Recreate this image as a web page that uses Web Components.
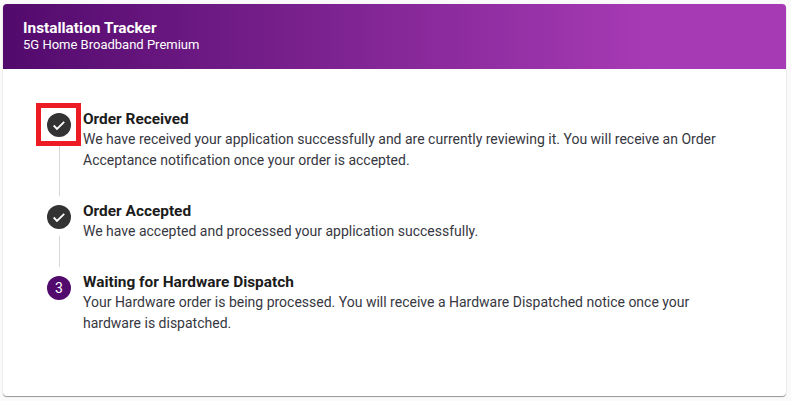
<!DOCTYPE html>
<html>
<head>
<meta charset="utf-8">
<title>Installation Tracker</title>
<style>
  html, body { margin: 0; height: 100%; background: #fafafa; overflow: hidden; }
  body { font-family: Roboto, "Liberation Sans", sans-serif; color: #212121; }
</style>
</head>
<body>
<tracker-card heading="Installation Tracker" subheading="5G Home Broadband Premium">
  <tracker-step state="done" marked heading="Order Received">We have received your application successfully and are currently reviewing it. You will receive an Order Acceptance notification once your order is accepted.</tracker-step>
  <tracker-step state="done" heading="Order Accepted">We have accepted and processed your application successfully.</tracker-step>
  <tracker-step number="3" last heading="Waiting for Hardware Dispatch">Your Hardware order is being processed. You will receive a Hardware Dispatched notice once your hardware is dispatched.</tracker-step>
</tracker-card>

<script>
class TrackerCard extends HTMLElement {
  constructor() {
    super();
    this.attachShadow({ mode: 'open' });
    this.shadowRoot.innerHTML = `
      <style>
        :host {
          display: block;
          box-sizing: border-box;
          width: 783px;
          height: 392px;
          margin: 4px 0 0 3px;
          background: #fff;
          border-radius: 4px;
          overflow: hidden;
          box-shadow: 0 1px 1px rgba(0,0,0,0.4), 0 0 2px rgba(0,0,0,0.06);
        }
        header {
          height: 65px;
          box-sizing: border-box;
          padding: 15px 20px 0;
          color: #fff;
          background: linear-gradient(90deg, #520a6c 0%, #a63ab4 82%);
        }
        h1 { margin: 0; font-size: 15.4px; line-height: 18px; font-weight: 700; }
        p { margin: 0; font-size: 13px; line-height: 16px; }
        main { padding: 39px 44px 0; }
      </style>
      <header>
        <h1>${this.getAttribute('heading')}</h1>
        <p>${this.getAttribute('subheading')}</p>
      </header>
      <main><slot></slot></main>
    `;
  }
}

class TrackerStep extends HTMLElement {
  constructor() {
    super();
    this.attachShadow({ mode: 'open' });
    let badge = this.getAttribute('state') == 'done'
      ? `<svg width="14" height="14" viewBox="0 0 14 14"><path d="M1.7 7.5 L5 10.9 L12.2 3.9" fill="none" stroke="#fff" stroke-width="1.8"/></svg>`
      : this.getAttribute('number');
    this.shadowRoot.innerHTML = `
      <style>
        :host { display: flex; position: relative; }
        .rail { width: 24px; margin-right: 12px; display: flex; flex-direction: column; align-items: center; }
        .badge {
          flex: none;
          width: 24px;
          height: 24px;
          margin-top: 5px;
          border-radius: 50%;
          display: flex;
          align-items: center;
          justify-content: center;
          color: #fff;
          font-size: 14px;
          background: #333;
        }
        :host([number]) .badge { background: #520a6c; }
        .line { flex: 1; width: 1px; margin: 7px 0 4px; background: #d6d6d6; }
        :host([last]) .line { visibility: hidden; }
        .text { flex: 1; padding: 1px 0 29px; }
        h2 { margin: 0; font-size: 15.4px; line-height: 20px; font-weight: 700; color: #1c1c1c; }
        .desc { font-size: 14px; line-height: 21px; color: #37373f; }
        .mark {
          display: none;
          position: absolute;
          left: -11px;
          top: -5px;
          width: 45px;
          height: 43px;
          box-sizing: border-box;
          border: 5px solid #ed1c24;
        }
        :host([marked]) .mark { display: block; }
      </style>
      <div class="rail">
        <div class="badge">${badge}</div>
        <div class="line"></div>
      </div>
      <div class="text">
        <h2>${this.getAttribute('heading')}</h2>
        <div class="desc"><slot></slot></div>
      </div>
      <div class="mark"></div>
    `;
  }
}

customElements.define('tracker-card', TrackerCard);
customElements.define('tracker-step', TrackerStep);
</script>
</body>
</html>
